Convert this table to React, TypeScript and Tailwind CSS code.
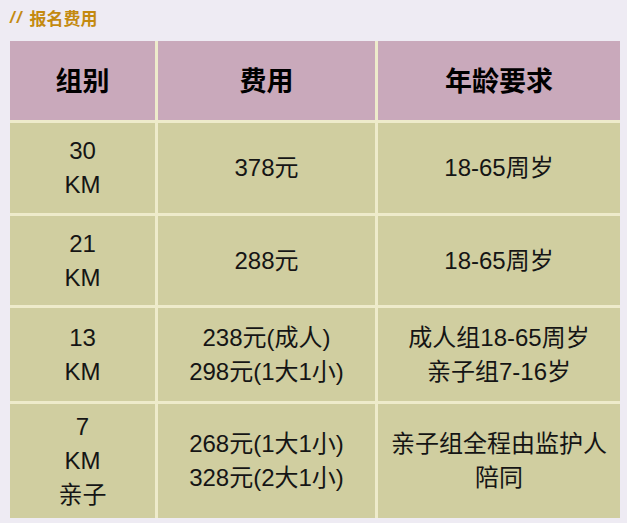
type Row = { group: string[]; fee: string[]; age: string[] };

const rows: Row[] = [
  { group: ['30', 'KM'], fee: ['378元'], age: ['18-65周岁'] },
  { group: ['21', 'KM'], fee: ['288元'], age: ['18-65周岁'] },
  { group: ['13', 'KM'], fee: ['238元(成人)', '298元(1大1小)'], age: ['成人组18-65周岁', '亲子组7-16岁'] },
  { group: ['7', 'KM', '亲子'], fee: ['268元(1大1小)', '328元(2大1小)'], age: ['亲子组全程由监护人', '陪同'] },
];

function Cell({ lines }: { lines: string[] }) {
  return (
    <div className="bg-[#d0cea0] flex flex-col items-center justify-center text-center text-[24px] leading-[34px] text-[#151515]">
      {lines.map((l, i) => (
        <div key={i}>{l}</div>
      ))}
    </div>
  );
}

export default function App() {
  return (
    <div
      className="min-h-[523px] bg-[#eeebf3] pt-[6px] px-[10px] pb-[5px]"
      style={{ fontFamily: '"Liberation Sans", "Noto Sans CJK SC", sans-serif' }}
    >
      {/* TITLE */}
      <div className="h-[24px] flex items-center text-[17px] font-semibold text-[#c48a10]">
        <span className="italic font-bold tracking-[2px] mr-[6px]">//</span>
        <span style={{ fontFamily: '"Noto Sans CJK SC", sans-serif' }}>报名费用</span>
      </div>

      {/* TABLE */}
      <div className="mt-[11px] w-[610px] grid grid-cols-[145px_217px_242px] grid-rows-[79px_90px_89px_93px_114px] gap-[3px] bg-[#eeebcb]">
        {['组别', '费用', '年龄要求'].map((h) => (
          <div
            key={h}
            className="bg-[#c9a9bb] flex items-center justify-center text-[27px] font-bold text-black"
            style={{ fontFamily: '"Noto Sans CJK SC", sans-serif' }}
          >
            {h}
          </div>
        ))}
        {rows.map((r, i) => (
          <div key={i} className="contents">
            <Cell lines={r.group} />
            <Cell lines={r.fee} />
            <Cell lines={r.age} />
          </div>
        ))}
      </div>
    </div>
  );
}
